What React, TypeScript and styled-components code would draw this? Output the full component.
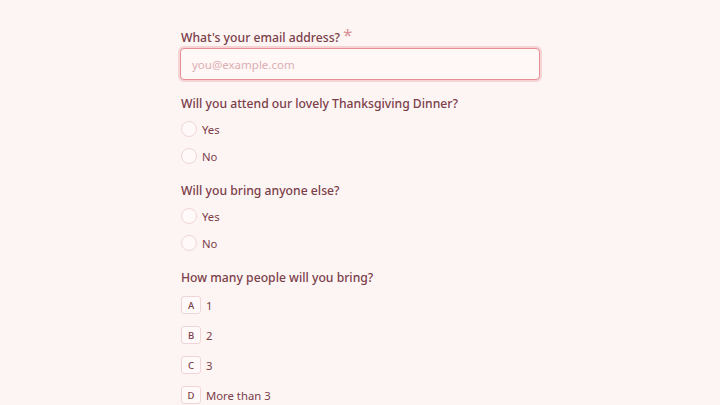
import styled, { createGlobalStyle } from "styled-components";

const GlobalStyle = createGlobalStyle`
  html, body {
    margin: 0;
    padding: 0;
    background: #fdf5f4;
    font-family: "Noto Sans", "Open Sans", sans-serif;
    color: #7a3f49;
  }
`;

const attendOptions = ["Yes", "No"];
const bringOptions = ["Yes", "No"];
const countOptions = [
  { key: "A", label: "1" },
  { key: "B", label: "2" },
  { key: "C", label: "3" },
  { key: "D", label: "More than 3" },
];

export default function App() {
  return (
    <>
      <GlobalStyle />
      <Page>
        <Form>
          <Field>
            <Question>
              What's your email address?<Required>*</Required>
            </Question>
            <EmailInput placeholder="you@example.com" />
          </Field>

          <Field>
            <Question>Will you attend our lovely Thanksgiving Dinner?</Question>
            <RadioList>
              {attendOptions.map((o) => (
                <RadioRow key={o}>
                  <RadioCircle />
                  <OptionText>{o}</OptionText>
                </RadioRow>
              ))}
            </RadioList>
          </Field>

          <Field>
            <Question>Will you bring anyone else?</Question>
            <RadioList>
              {bringOptions.map((o) => (
                <RadioRow key={o}>
                  <RadioCircle />
                  <OptionText>{o}</OptionText>
                </RadioRow>
              ))}
            </RadioList>
          </Field>

          <Field>
            <Question>How many people will you bring?</Question>
            <ChoiceList>
              {countOptions.map((o) => (
                <ChoiceRow key={o.key}>
                  <KeyBox>{o.key}</KeyBox>
                  <OptionText>{o.label}</OptionText>
                </ChoiceRow>
              ))}
            </ChoiceList>
          </Field>
        </Form>
      </Page>
    </>
  );
}

const Page = styled.div`
  display: flex;
  justify-content: center;
  padding-top: 28px;
  min-height: 405px;
  box-sizing: border-box;
`;

const Form = styled.div`
  width: 360px;
  display: flex;
  flex-direction: column;
  gap: 14px;
`;

const Field = styled.div`
  display: flex;
  flex-direction: column;
`;

const Question = styled.div`
  font-size: 12.2px;
  line-height: 20px;
  height: 20px;
  font-weight: 500;
  color: #7b4049;
  padding-left: 1px;
`;

const Required = styled.span`
  color: #d98e94;
  font-size: 17px;
  font-weight: 400;
  line-height: 0;
  margin-left: 3px;
  position: relative;
  top: -1px;
`;

const EmailInput = styled.input`
  box-sizing: border-box;
  width: 360px;
  height: 32px;
  padding: 0 11px;
  font-family: "Noto Sans", "Open Sans", sans-serif;
  font-size: 11.5px;
  color: #7a3f49;
  background: #fff8f7;
  border: 1px solid #e58f96;
  border-radius: 4px;
  box-shadow: 0 0 0 2px #f8d3d4;
  outline: none;

  &::placeholder {
    color: #dcaeb2;
  }
`;

const RadioList = styled.div`
  display: flex;
  flex-direction: column;
  gap: 5px;
  margin-top: 4px;
`;

const RadioRow = styled.div`
  height: 22px;
  display: flex;
  align-items: center;
  gap: 5px;
  padding-left: 1px;
`;

const RadioCircle = styled.span`
  box-sizing: border-box;
  width: 16px;
  height: 16px;
  border-radius: 50%;
  border: 1px solid #efd5d6;
  background: #fffaf9;
`;

const OptionText = styled.span`
  font-size: 11.3px;
  color: #7b4049;
`;

const ChoiceList = styled.div`
  display: flex;
  flex-direction: column;
  gap: 6px;
  margin-top: 5px;
`;

const ChoiceRow = styled.div`
  height: 24px;
  display: flex;
  align-items: center;
  gap: 5px;
  padding-left: 1px;
`;

const KeyBox = styled.span`
  box-sizing: border-box;
  width: 20px;
  height: 18px;
  display: flex;
  align-items: center;
  justify-content: center;
  font-size: 9.5px;
  font-weight: 500;
  color: #7a3f49;
  border: 1px solid #efd5d6;
  border-radius: 3px;
  background: #fffaf9;
`;
